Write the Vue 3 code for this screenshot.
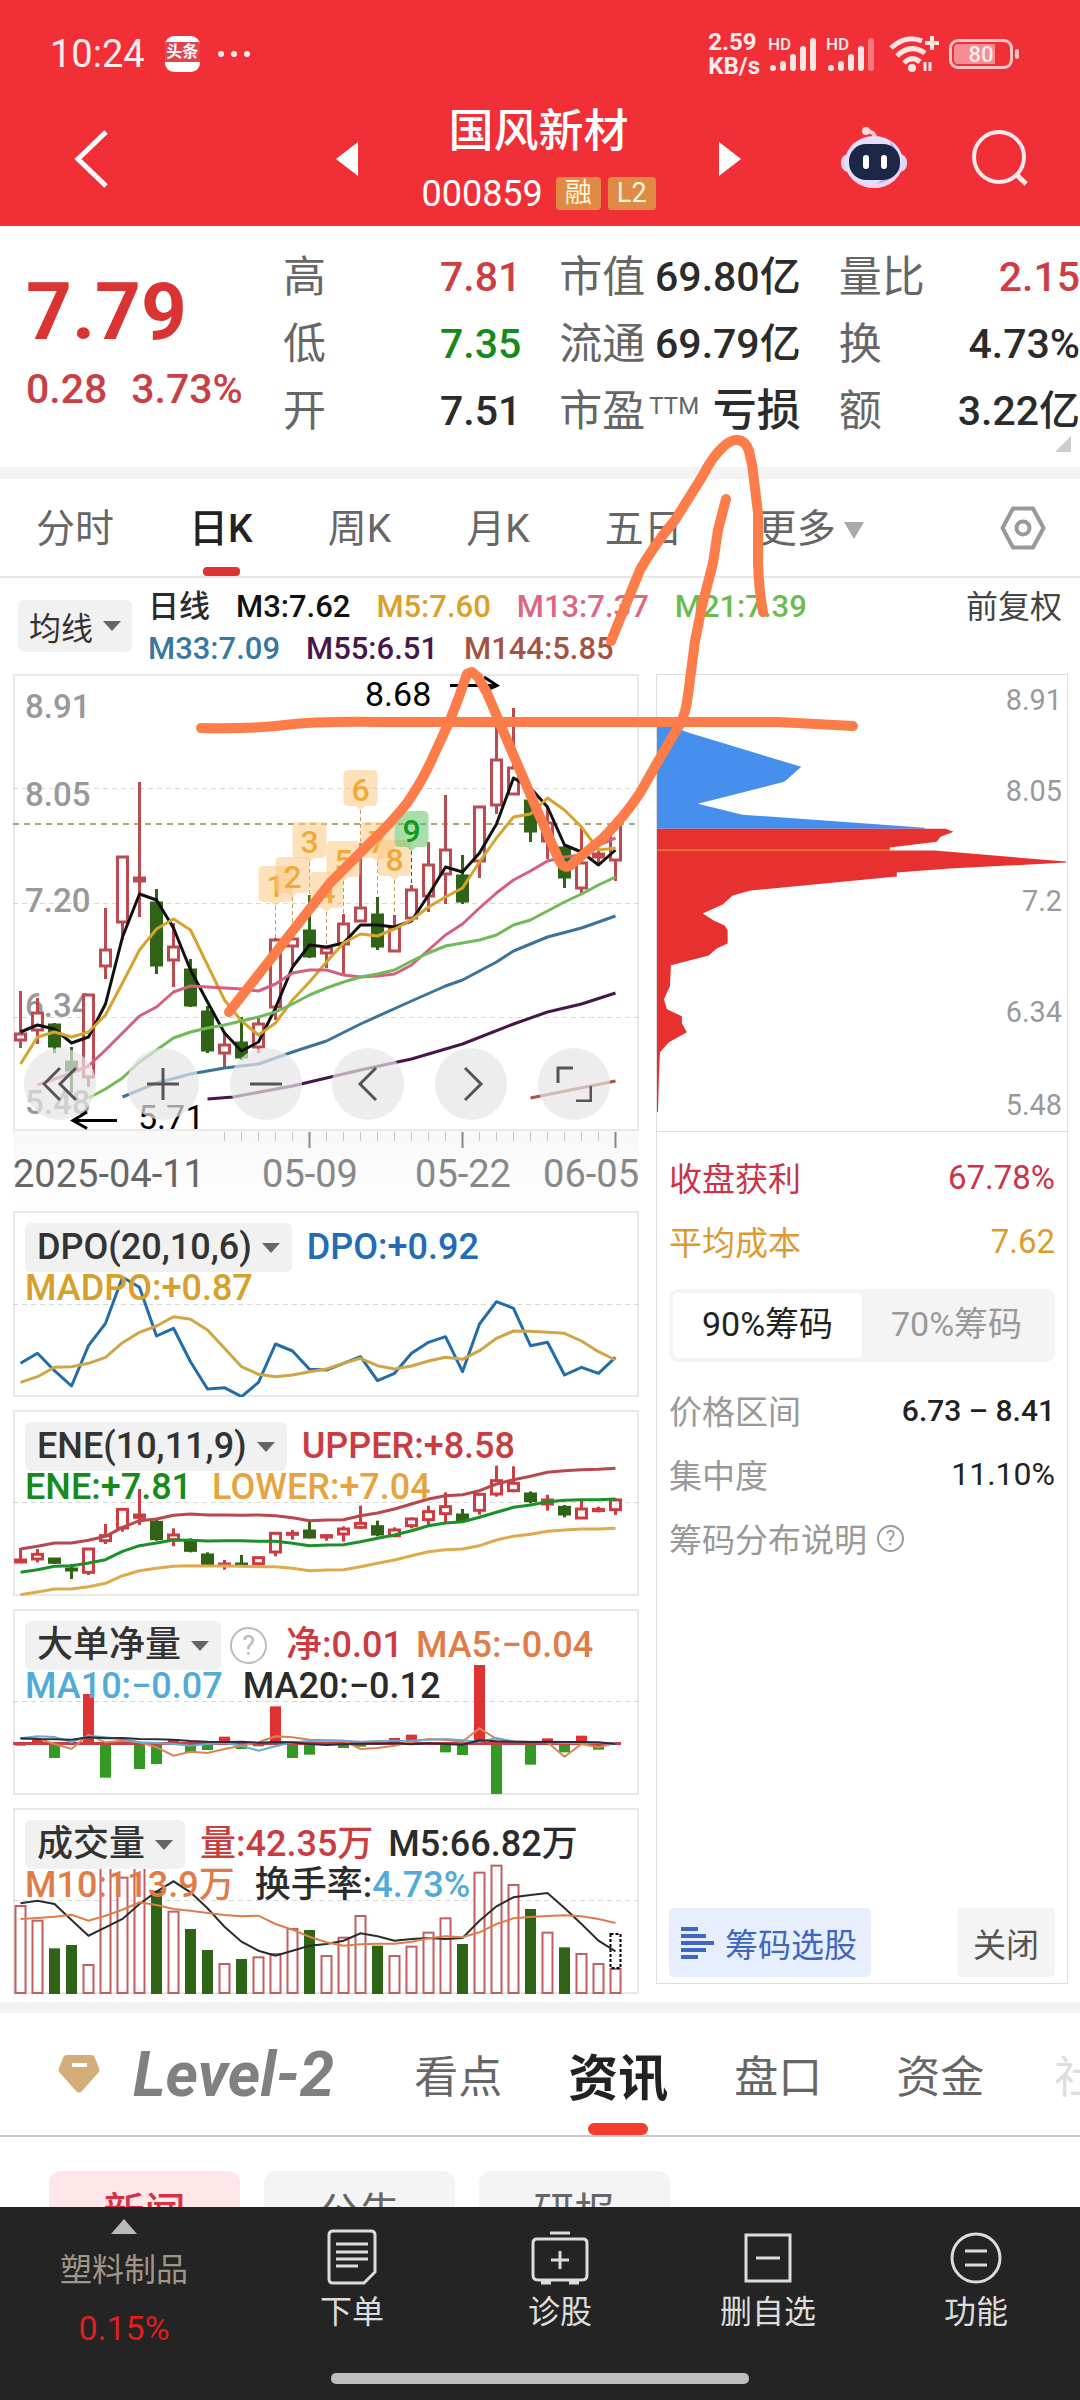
<script setup>
import { ref } from 'vue'

const xAt = (i) => 20.5 + 17 * i
const line = (values, scale = 3, start = 0) =>
  values.map((v, i) => `${xAt(i + start)},${(v / scale).toFixed(1)}`).join(' ')
const sparse = (pairs) => pairs.map(([i, y]) => `${xAt(i)},${y}`).join(' ')

const stats = [
  [
    { label: '高', value: '7.81', tone: 'up' },
    { label: '低', value: '7.35', tone: 'down' },
    { label: '开', value: '7.51' },
  ],
  [
    { label: '市值', value: '69.80亿' },
    { label: '流通', value: '69.79亿' },
    { label: '市盈', sup: 'TTM', value: '亏损', strong: true },
  ],
  [
    { label: '量比', value: '2.15', tone: 'up' },
    { label: '换', value: '4.73%' },
    { label: '额', value: '3.22亿' },
  ],
]

const periods = ['分时', '日K', '周K', '月K', '五日', '更多']
const period = ref('日K')

const legend = [
  [
    { text: '日线', color: '#2b2b2b' },
    { text: 'M3:7.62', color: '#111' },
    { text: 'M5:7.60', color: '#d9a02a' },
    { text: 'M13:7.37', color: '#dd6680' },
    { text: 'M21:7.39', color: '#6dbb50' },
  ],
  [
    { text: 'M33:7.09', color: '#3878a0' },
    { text: 'M55:6.51', color: '#47164f' },
    { text: 'M144:5.85', color: '#a65243' },
  ],
]

// [rising, high, body top, body bottom, low]
const candles = [
  [1, 991, 1033, 1041, 1048], [1, 998, 1012, 1031, 1044], [0, 1023, 1024, 1047, 1053], [0, 1047, 1061, 1071, 1093],
  [1, 994, 994, 1078, 1087], [1, 908, 949, 967, 979], [1, 856, 856, 923, 940], [1, 782, 877, 882, 917],
  [0, 889, 902, 966, 974], [1, 923, 946, 961, 987], [0, 959, 969, 1006, 1007], [0, 1006, 1011, 1051, 1053],
  [1, 1033, 1044, 1054, 1068], [0, 1017, 1042, 1058, 1060], [1, 1017, 1023, 1048, 1053], [1, 938, 939, 1008, 1020],
  [1, 937, 938, 947, 965], [0, 895, 930, 957, 958], [1, 946, 947, 954, 968], [1, 914, 923, 945, 975],
  [1, 843, 907, 922, 922], [0, 897, 914, 947, 950], [1, 915, 927, 952, 952], [1, 885, 889, 919, 922],
  [1, 842, 864, 897, 912], [1, 795, 849, 875, 904], [0, 855, 875, 902, 904], [1, 806, 806, 862, 878],
  [1, 706, 759, 806, 814], [1, 708, 767, 795, 795], [0, 800, 800, 832, 842], [1, 807, 822, 842, 859],
  [0, 846, 847, 878, 888], [1, 828, 862, 889, 894], [1, 850, 853, 858, 866], [1, 824, 825, 861, 881],
]

const averages = [
  { color: '#111', points: line([1032, 1025, 1029, 1043, 1037, 1004, 937, 894, 900, 928, 970, 1002, 1033, 1051, 1042, 1008, 967, 945, 947, 943, 925, 925, 927, 921, 895, 867, 872, 853, 824, 778, 788, 807, 845, 852, 865, 850], 1) },
  { color: '#d5a330', points: line([1064, 1037, 1032, 1037, 1032, 1015, 983, 950, 929, 919, 930, 965, 1000, 1021, 1035, 1023, 1000, 982, 962, 943, 934, 936, 929, 920, 907, 897, 888, 862, 838, 817, 814, 798, 810, 827, 850, 848], 1) },
  { color: '#d4607e', points: line([1085, 1079, 1073, 1066, 1050, 1033, 1016, 1007, 992, 986, 987, 988, 989, 991, 984, 973, 970, 970, 975, 977, 976, 974, 965, 950, 935, 924, 908, 893, 880, 871, 861, 857, 855, 845, 838], 1, 1) },
  { color: '#72b95a', points: line([1098, 1089, 1078, 1062, 1050, 1038, 1032, 1028, 1025, 1021, 1017, 1012, 1004, 995, 988, 982, 977, 974, 970, 961, 953, 946, 943, 940, 935, 925, 920, 911, 902, 894, 885, 877], 1, 4) },
  { color: '#3c7399', points: sparse([[6, 1097], [8, 1083], [10, 1074], [12, 1068], [14, 1064], [16, 1052], [18, 1041], [20, 1024], [23, 1001], [25, 986], [26, 980], [28, 962], [29, 951], [31, 937], [33, 928], [35, 916]]) },
  { color: '#451749', points: sparse([[11, 1099], [12.5, 1097], [16, 1086], [20, 1070], [23, 1059], [26, 1044], [29, 1024], [31, 1012], [33, 1004], [35, 993]]) },
  { color: '#a85545', points: sparse([[30, 1098], [35, 1081]]) },
]

const markers = [
  { n: 1, top: 866, end: 938 }, { n: 2, top: 857, end: 938 }, { n: 3, top: 822, end: 895 },
  { n: 4, top: 872, end: 946 }, { n: 5, top: 841, end: 914 }, { n: 6, top: 770, end: 843 },
  { n: 7, top: 822, end: 897 }, { n: 8, top: 840, end: 915 }, { n: 9, top: 811, end: 885 },
].map((m, k) => ({ ...m, x: xAt(15 + k) }))

const priceTicks = [[718, '8.91'], [806, '8.05'], [912, '7.20'], [1017, '6.34'], [1114, '5.48']]
const chipTicks = [[709, '8.91'], [800, '8.05'], [911, '7.2'], [1022, '6.34'], [1115, '5.48']]
const dayTicks = Array.from({ length: 24 }, (_, k) => k + 12)

const dpo = line([490, 460, 512, 558, 437, 370, 232, 262, 408, 385, 485, 567, 563, 590, 547, 432, 453, 508, 510, 490, 470, 542, 520, 460, 427, 410, 515, 372, 305, 325, 437, 427, 525, 502, 520, 472])
const madpo = line([547, 530, 502, 500, 490, 472, 428, 397, 378, 350, 358, 390, 445, 500, 523, 530, 525, 515, 507, 490, 475, 497, 507, 498, 483, 472, 478, 452, 415, 393, 394, 397, 400, 423, 455, 480])

const eneLines = [
  { color: '#b8474e', points: line([1050, 1042, 1032, 1032, 1024, 1012, 985, 965, 960, 949, 945, 948, 948, 949, 948, 950, 956, 965, 963, 962, 950, 942, 930, 915, 900, 890, 887, 875, 855, 842, 832, 820, 815, 812, 811, 808]) },
  { color: '#1b8f28', points: line([1120, 1112, 1102, 1100, 1092, 1082, 1057, 1040, 1032, 1023, 1024, 1026, 1025, 1025, 1027, 1027, 1033, 1040, 1038, 1037, 1028, 1018, 1008, 995, 980, 972, 968, 955, 940, 925, 918, 908, 904, 902, 902, 900]) },
  { color: '#dfaa4c', points: line([1187, 1179, 1170, 1170, 1163, 1153, 1130, 1115, 1108, 1102, 1100, 1101, 1101, 1102, 1103, 1103, 1108, 1115, 1113, 1112, 1103, 1093, 1083, 1070, 1058, 1052, 1050, 1040, 1023, 1012, 1006, 997, 993, 990, 990, 988]) },
]
const eneCandles = [
  [1, 1047, 1080, 1092, 1092], [1, 1050, 1063, 1083, 1090], [0, 1077, 1077, 1093, 1095], [0, 1095, 1107, 1112, 1140],
  [1, 1047, 1047, 1123, 1128], [1, 975, 1007, 1028, 1035], [1, 928, 928, 990, 998], [1, 870, 945, 958, 978],
  [0, 960, 967, 1022, 1025], [1, 988, 1005, 1025, 1042], [0, 1018, 1022, 1057, 1060], [0, 1060, 1065, 1097, 1100],
  [1, 1083, 1092, 1100, 1112], [0, 1068, 1092, 1098, 1100], [1, 1073, 1073, 1097, 1100], [1, 1000, 1000, 1062, 1072],
  [1, 993, 1000, 1008, 1022], [0, 967, 993, 1017, 1018], [1, 1005, 1007, 1017, 1025], [1, 982, 987, 1008, 1028],
  [1, 920, 970, 988, 990], [0, 965, 980, 1008, 1012], [1, 985, 990, 1013, 1015], [1, 955, 957, 983, 988],
  [1, 920, 935, 965, 978], [1, 880, 920, 947, 970], [0, 930, 945, 967, 970], [1, 883, 883, 937, 947],
  [1, 800, 842, 888, 893], [1, 802, 850, 878, 880], [0, 877, 882, 908, 913], [1, 887, 900, 918, 935],
  [0, 918, 922, 948, 955], [1, 905, 927, 960, 960], [1, 923, 928, 938, 940], [1, 898, 900, 935, 948],
].map(([up, ...v]) => [up, ...v.map((n) => n / 3)])

const netBars = [
  [0, 440], [1, 422], [2, 477], [4, 285], [5, 536], [7, 510], [8, 495], [9, 420], [10, 460], [11, 453], [12, 413], [13, 450],
  [14, 442], [15, 322], [16, 477], [17, 467], [19, 447], [20, 443], [22, 417], [23, 407], [25, 460], [26, 468],
  [27, 198], [28, 585], [30, 497], [31, 418], [32, 460], [33, 410], [34, 452],
].map(([i, v]) => ({ x: xAt(i) - 5.5, y: Math.min(v, 433) / 3, h: Math.abs(v - 433) / 3, up: v < 433 }))
const netLines = [
  { color: '#dc8354', points: line([420, 418, 435, 450, 408, 430, 425, 430, 445, 470, 458, 462, 450, 440, 430, 412, 415, 422, 424, 425, 450, 447, 440, 428, 420, 423, 428, 388, 420, 427, 428, 430, 473, 435, 445, 432]) },
  { color: '#68a9cf', points: line([418, 412, 414, 430, 410, 415, 420, 430, 432, 435, 440, 435, 432, 440, 455, 442, 430, 426, 425, 425, 428, 426, 425, 425, 422, 420, 424, 428, 417, 428, 429, 430, 432, 431, 432, 434]) },
  { color: '#2a2d3d', points: line([418, 420, 421, 422, 415, 418, 417, 420, 421, 422, 426, 428, 429, 428, 431, 429, 430, 435, 438, 436, 434, 434, 433, 436, 433, 435, 437, 424, 427, 428, 429, 428, 429, 429, 430, 435]) },
]

const volumes = [
  [1, 918], [1, 962], [0, 1048], [0, 1038], [1, 1095], [1, 795], [1, 833], [1, 795], [0, 875], [1, 935], [0, 990], [0, 1053],
  [1, 1092], [0, 1080], [1, 1072], [1, 1062], [1, 987], [0, 993], [1, 1068], [1, 1013], [1, 948], [0, 1040], [1, 1068], [1, 1040],
  [1, 998], [1, 955], [0, 1035], [1, 818], [1, 797], [1, 855], [0, 930], [1, 998], [0, 1045], [1, 1062], [1, 1092], [1, 1107],
]
const volumeLines = [
  { color: '#2c2c2c', points: line([913, 905, 915, 963, 1010, 985, 960, 915, 878, 847, 880, 928, 983, 1028, 1055, 1070, 1055, 1040, 1035, 1025, 1003, 1012, 1025, 1020, 1017, 1020, 1017, 965, 922, 895, 888, 882, 927, 975, 1025, 1057]) },
  { color: '#dd7d4c', points: line([960, 957, 953, 947, 965, 950, 932, 910, 918, 930, 935, 942, 948, 952, 950, 975, 992, 1013, 1030, 1040, 1036, 1034, 1034, 1028, 1018, 1012, 1015, 1000, 975, 958, 954, 951, 949, 952, 960, 972]) },
]

const chipRange = ref('90')
const sections = ['看点', '资讯', '盘口', '资金', '社区']
const section = ref('资讯')
</script>

<template>
  <div class="page">
    <header class="top">
      <div class="status">
        <span class="clock">10:24</span>
        <span class="app-badge"><b>头条</b><i></i></span>
        <span class="dots"><i></i><i></i><i></i></span>
        <span class="speed">2.59<br />KB/s</span>
        <span v-for="n in 2" :key="n" class="signal">
          <small>HD</small>
          <svg viewBox="0 0 50 36" aria-hidden="true">
            <g stroke="#ffe4e4" stroke-width="6" stroke-linecap="round">
              <path d="M5 32v0" /><path d="M15 28v4" /><path d="M25 21v11" /><path d="M35 13v19" />
              <path d="M45 5v27" :opacity="n === 2 ? 0.4 : 1" />
            </g>
          </svg>
        </span>
        <svg class="wifi" viewBox="0 0 52 38" aria-hidden="true">
          <g fill="none" stroke="#ffe4e4" stroke-width="5">
            <path d="M2 13Q17 -1 33 6" /><path d="M8 21Q21 8 36 18" /><path d="M15 28Q23 20 31 27" />
            <path d="M43 1v14M36 8h14" stroke-width="4" />
            <path d="M36 27v9M41 36v-9" stroke-width="3" />
          </g>
          <circle cx="23" cy="33" r="4" fill="#ffe4e4" />
        </svg>
        <span class="battery"><b>80</b></span>
      </div>
      <div class="title-bar">
        <button class="back" aria-label="返回">
          <svg viewBox="0 0 40 60"><path d="M34 3 6 30 34 57" fill="none" stroke="#fff" stroke-width="5" /></svg>
        </button>
        <button class="step" aria-label="上一只"><svg viewBox="0 0 22 34"><path d="M22 0v34L0 17z" fill="#fff" /></svg></button>
        <div class="stock">
          <h1>国风新材</h1>
          <p><span>000859</span><em>融</em><em>L2</em></p>
        </div>
        <button class="step" aria-label="下一只"><svg viewBox="0 0 22 34"><path d="M0 0v34l22-17z" fill="#fff" /></svg></button>
        <button class="robot" aria-label="助手">
          <svg viewBox="0 0 68 64">
            <path d="M35 13Q36 5 27 4" fill="none" stroke="#ffc9d4" stroke-width="4" />
            <circle cx="26" cy="4" r="4" fill="#ffd9dd" />
            <rect x="1" y="27" width="66" height="18" rx="8" fill="#ded6fa" />
            <ellipse cx="34" cy="35" rx="29" ry="26" fill="#e6dffb" />
            <path d="M50 15Q62 25 60 42 52 60 30 59 58 50 50 15" fill="#bdb0f2" />
            <path d="M9 46Q34 68 58 46 50 61 34 61T9 46" fill="#f4d5ee" />
            <rect x="9" y="17" width="51" height="36" rx="17" fill="#1c2747" />
            <path d="M26 31v8M44 31v8" stroke="#fff" stroke-width="6" stroke-linecap="round" />
          </svg>
        </button>
        <button class="search" aria-label="搜索">
          <svg viewBox="0 0 60 60"><circle cx="29" cy="28" r="25" fill="none" stroke="#ffe9e9" stroke-width="4" /><path d="m46 45 10 10" stroke="#ffe9e9" stroke-width="5" /></svg>
        </button>
      </div>
    </header>

    <section class="quote">
      <div class="price">
        <strong>7.79</strong>
        <p><span>0.28</span><span>3.73%</span></p>
      </div>
      <div class="stats">
        <dl v-for="(column, c) in stats" :key="c">
          <div v-for="s in column" :key="s.label">
            <dt>{{ s.label }}<sup v-if="s.sup">{{ s.sup }}</sup></dt>
            <dd :class="[s.tone, { strong: s.strong }]">{{ s.value }}</dd>
          </div>
        </dl>
      </div>
      <i class="corner"></i>
    </section>

    <nav class="periods">
      <button v-for="p in periods" :key="p" :class="{ active: p === period }" @click="period = p">
        {{ p }}<i v-if="p === '更多'" class="caret"></i>
      </button>
      <button class="settings" aria-label="设置">
        <svg viewBox="0 0 46 44"><g fill="none" stroke="#999" stroke-width="4"><path d="M13 2.500h20L43.500 22 33 41.500H13L2.500 22z" stroke-linejoin="round" /><circle cx="23" cy="22" r="6.500" /></g></svg>
      </button>
    </nav>

    <div class="legend">
      <button class="pick">均线<i class="caret"></i></button>
      <div class="legend-rows">
        <p v-for="(row, r) in legend" :key="r">
          <span v-for="item in row" :key="item.text" :style="{ color: item.color }">{{ item.text }}</span>
        </p>
      </div>
      <button class="adjust">前复权</button>
    </div>

    <main class="board">
      <div class="charts">
        <div class="kline">
          <svg viewBox="13 674 626 457" preserveAspectRatio="none">
            <g stroke="#d8d8d8" stroke-width="1" stroke-dasharray="5 4"><path d="M13 788.500H639M13 903.500H639M13 1017.500H639" /></g>
            <path d="M13 824H639" stroke="#a8a878" stroke-width="2" stroke-dasharray="6 5" />
            <g class="axis-label"><text v-for="t in priceTicks" :key="t[1]" x="25" :y="t[0]">{{ t[1] }}</text></g>
            <g v-for="(c, i) in candles" :key="i" :stroke="c[0] ? '#bb4b50' : '#2f6416'" :fill="c[0] ? '#fff' : '#2f6416'">
              <path :d="`M${xAt(i)} ${c[1]}V${c[4]}`" stroke-width="3" />
              <rect :x="xAt(i) - 5" :y="c[2] + 1" width="10" :height="Math.max(2, c[3] - c[2] - 2)" stroke-width="3" />
            </g>
            <polyline v-for="a in averages" :key="a.color" :points="a.points" fill="none" :stroke="a.color" stroke-width="3" stroke-linejoin="round" />
            <g v-for="m in markers" :key="m.n">
              <path :d="`M${m.x} ${m.top + 40}V${m.end}`" :stroke="m.n === 9 ? '#286b28' : '#bda05c'" stroke-dasharray="4 3" />
              <path :d="`M${m.x - 12} ${m.top}h24q5 0 5 5v26q0 5 -5 5h-7l-5 4-5-4h-7q-5 0-5-5v-26q0-5 5-5z`" :fill="m.n === 9 ? '#63c268' : '#fcc983'" opacity="0.55" />
              <text :x="m.x" :y="m.top + 31" text-anchor="middle" class="marker" :fill="m.n === 9 ? '#0f9a18' : '#efaa3a'">{{ m.n }}</text>
            </g>
            <g class="extreme"><text x="365" y="706">8.68</text><text x="138" y="1129">5.71</text></g>
            <g fill="none" stroke="#000" stroke-width="3"><path d="M450 685.500H494M484 677l13 8.500-13 6" /><path d="M117 1120.500H73M87 1112l-14 8.500 14 8" /></g>
          </svg>
          <div class="tools">
            <button aria-label="最早"><svg viewBox="0 0 36 36"><path d="M18 2 2 18l16 16M34 2 18 18l16 16" /></svg></button>
            <button aria-label="放大"><svg viewBox="0 0 36 36"><path d="M2 18h32M18 2v32" /></svg></button>
            <button aria-label="缩小"><svg viewBox="0 0 36 36"><path d="M2 18h32" /></svg></button>
            <button aria-label="向左"><svg viewBox="0 0 36 36"><path d="M26 2 10 18l16 16" /></svg></button>
            <button aria-label="向右"><svg viewBox="0 0 36 36"><path d="M12 2l16 16-16 16" /></svg></button>
            <button aria-label="全屏"><svg viewBox="0 0 36 36"><path d="M17 2H2v15M20 35h15V20" /></svg></button>
          </div>
        </div>
        <svg class="dates" viewBox="13 1131 626 80" preserveAspectRatio="none">
          <path v-for="i in dayTicks" :key="i" :d="`M${xAt(i)} 1132v${i % 9 === 8 ? 16 : 9}`" :stroke="i % 9 === 8 ? '#888' : '#c4c4c4'" :stroke-width="i % 9 === 8 ? 2 : 1" />
          <text x="13" y="1187" fill="#666">2025-04-11</text>
          <g fill="#888"><text x="310" y="1187" text-anchor="middle">05-09</text><text x="463" y="1187" text-anchor="middle">05-22</text><text x="639" y="1187" text-anchor="end">06-05</text></g>
        </svg>

        <section class="sub">
          <svg viewBox="13 11 626 186" preserveAspectRatio="none">
            <path class="mid" d="M13 104.500H639" />
            <g fill="none" stroke-width="3" stroke-linejoin="round"><polyline :points="dpo" stroke="#226ca8" /><polyline :points="madpo" stroke="#cfa647" /></g>
          </svg>
          <p><button class="pick">DPO(20,10,6)<i class="caret"></i></button><span class="blue">DPO:+0.92</span></p>
          <p class="second"><span class="gold">MADPO:+0.87</span></p>
        </section>

        <section class="sub">
          <svg viewBox="13 211 626 186" preserveAspectRatio="none">
            <path class="mid" d="M13 303.500H639" />
            <g v-for="(c, i) in eneCandles" :key="i" :stroke="c[0] ? '#ce3c42' : '#2f6416'" :fill="c[0] ? '#fff' : '#2f6416'">
              <path :d="`M${xAt(i)} ${c[1]}V${c[4]}`" stroke-width="3" />
              <rect :x="xAt(i) - 5" :y="c[2] + 1" width="10" :height="Math.max(1, c[3] - c[2] - 2)" stroke-width="3" />
            </g>
            <polyline v-for="l in eneLines" :key="l.color" :points="l.points" fill="none" :stroke="l.color" stroke-width="3" stroke-linejoin="round" />
          </svg>
          <p><button class="pick">ENE(10,11,9)<i class="caret"></i></button><span class="red">UPPER:+8.58</span></p>
          <p class="second"><span class="green">ENE:+7.81</span><span class="amber">LOWER:+7.04</span></p>
        </section>

        <section class="sub">
          <svg viewBox="13 10 626 186" preserveAspectRatio="none">
            <path class="mid" d="M13 102.500H639" />
            <rect v-for="b in netBars" :key="b.x" :x="b.x" :y="b.y" width="11" :height="b.h" :fill="b.up ? '#e03133' : '#329922'" />
            <path d="M13 144.500H621" stroke="#c93e44" stroke-width="3" />
            <polyline v-for="l in netLines" :key="l.color" :points="l.points" fill="none" :stroke="l.color" stroke-width="2" />
          </svg>
          <p class="tight"><button class="pick">大单净量<i class="caret"></i></button><i class="help big">?</i><span class="red">净:0.01</span><span class="orange">MA5:−0.04</span></p>
          <p class="second"><span class="sky">MA10:−0.07</span><span>MA20:−0.12</span></p>
        </section>

        <section class="sub">
          <svg viewBox="13 209 626 186" preserveAspectRatio="none">
            <path class="mid" d="M13 301.500H639" />
            <template v-for="(v, i) in volumes" :key="i">
              <rect v-if="v[0]" :x="xAt(i) - 5" :y="v[1] / 3 + 1" width="10" :height="394 - v[1] / 3 - 1" fill="#fff" stroke="#c45e60" stroke-width="2" />
              <rect v-else :x="xAt(i) - 5.5" :y="v[1] / 3" width="11" :height="395 - v[1] / 3" fill="#2f6416" />
            </template>
            <rect x="610.500" y="335" width="10" height="34" fill="#fff" stroke="#000" stroke-width="2" stroke-dasharray="3 2" />
            <polyline v-for="l in volumeLines" :key="l.color" :points="l.points" fill="none" :stroke="l.color" stroke-width="2" />
          </svg>
          <p><button class="pick">成交量<i class="caret"></i></button><span class="red">量:42.35万</span><span>M5:66.82万</span></p>
          <p class="second"><span class="orange">M10:113.9万</span><span>换手率:<b class="sky">4.73%</b></span></p>
        </section>
      </div>

      <aside class="chips">
        <svg class="chip-chart" viewBox="656 674 412 457" preserveAspectRatio="none">
          <path d="M656 726H673L688 732 801 766 784 781 697 803 742 814 925 827V828H656z" fill="#468fec" />
          <path d="M656 828H946L954 831 941 836 937 841 890 847V850H935L1067 861V862L950 868 897 872V876L750 890 732 895 722 904 702 913 713 920 724 925 727 930V943L716 948 708 955 670 965 669 986 663 999 666 1009 681 1016V1023L686 1032 668 1042 659 1052 658 1075 657 1112H656z" fill="#e73030" />
          <path d="M656 849.500H895" stroke="#f0a03a" stroke-width="1" />
          <g class="chip-label"><text v-for="t in chipTicks" :key="t[1]" x="1063" :y="t[0]" text-anchor="end">{{ t[1] }}</text></g>
        </svg>
        <div class="chip-info">
          <p class="crimson"><span>收盘获利</span><span>67.78%</span></p>
          <p class="honey"><span>平均成本</span><span>7.62</span></p>
          <div class="toggle">
            <button :class="{ on: chipRange === '90' }" @click="chipRange = '90'">90%筹码</button>
            <button :class="{ on: chipRange === '70' }" @click="chipRange = '70'">70%筹码</button>
          </div>
          <p><span>价格区间</span><b>6.73 – 8.41</b></p>
          <p><span>集中度</span><b class="plain">11.10%</b></p>
          <p class="note"><span>筹码分布说明</span><i class="help">?</i></p>
        </div>
        <div class="chip-actions">
          <button class="select">
            <svg viewBox="0 0 34 32"><path d="M0 2h17M0 9h25M0 16h33M0 23h25M0 30h17" stroke="#3f66c0" stroke-width="4" /></svg>筹码选股
          </button>
          <button class="close">关闭</button>
        </div>
      </aside>
    </main>

    <nav class="sections">
      <svg class="gem" viewBox="0 0 42 38"><path d="M9 0h24q3 0 4 3l4 10q1 3-1 5L24 36q-3 3-6 0L2 18q-2-2-1-5L5 3q1-3 4-3z" fill="#d3ae79" /><path d="M14 10h15" stroke="#fff" stroke-width="4" /></svg>
      <a class="level" href="#level2">Level-2</a>
      <button v-for="s in sections" :key="s" :class="{ active: s === section, faded: s === '社区' }" @click="section = s">{{ s }}</button>
    </nav>
    <div class="news-types">
      <button class="active">新闻</button><button>公告</button><button>研报</button>
    </div>

    <svg class="doodle" viewBox="0 0 1080 1100" aria-hidden="true">
      <g fill="none" stroke="#fc7c4a" stroke-width="10" stroke-linecap="round" stroke-linejoin="round">
        <path d="M201 728Q252 729 285 725T380 722H778L853 726" />
        <path d="M229 1012 270 960 330 883 373 840Q391 823 407 803 423 780 433 757L450 720Q459 698 467 674L472 672 478 677 487 693 507 740 537 810 559 860Q565 872 573 863L603 838Q624 817 640 793L657 763 680 724Q686 713 688 695L695 641 702 606 713 563 718 530 726 499" />
        <path d="M611 641 640 570Q652 548 675 520L702 477Q712 457 723 447 731 439 738 440 746 441 749 451 753 466 754 480L758 513V563Q759 592 763 612" />
      </g>
    </svg>

    <footer class="dock">
      <div class="dock-items">
        <button class="sector"><i></i><span>塑料制品</span><b>0.15%</b></button>
        <button><svg viewBox="0 0 50 56"><path d="M6 2h38q4 0 4 4v37L37 54H6q-4 0-4-4V6q0-4 4-4zM9 15h32M9 23h32M9 30h32M9 37h22" /></svg>下单</button>
        <button><svg viewBox="0 0 58 56"><path d="M19 4h20M6 10h46q4 0 4 4v32q0 5-5 5H7q-5 0-5-5V14q0-4 4-4zM20 31h18M29 22v18M10 54h10M38 54h10" /></svg>诊股</button>
        <button><svg viewBox="0 0 50 56"><path d="M3 6h44v46H3zM13 29h24" /></svg>删自选</button>
        <button><svg viewBox="0 0 54 56"><circle cx="27" cy="29" r="24" /><path d="M16 22h22M16 36h22" /></svg>功能</button>
      </div>
      <i class="home"></i>
    </footer>
  </div>
</template>

<style>
body { background: #fff; }
</style>

<style scoped>
.page { position: relative; min-height: 100vh; overflow: hidden; background: #fff; color: #2b2b2b; font-family: Roboto, "Noto Sans CJK SC", sans-serif; }
.page * { box-sizing: border-box; }
p, h1, dl, dd { margin: 0; }
svg { display: block; }
i, em { font-style: normal; }
button { margin: 0; padding: 0; border: 0; background: none; color: inherit; font: inherit; cursor: pointer; white-space: nowrap; }
.caret { display: inline-block; border: solid transparent; border-width: 10px 9px 0; border-top-color: #666; }

.top { height: 226px; background: #f12f37; color: #fff; }
.status { display: flex; align-items: center; height: 92px; padding: 16px 63px 0 50px; color: #ffecec; }
.clock { font-size: 38px; }
.app-badge { display: flex; flex-direction: column; justify-content: flex-end; width: 35px; height: 36px; margin-left: 20px; overflow: hidden; border-radius: 9px; background: #fff; color: #fff; text-align: center; }
.app-badge b { background: #dd4550; font-size: 16px; line-height: 20px; }
.app-badge i { height: 10px; }
.dots { display: flex; gap: 7px; margin: 0 auto 0 18px; }
.dots i { width: 6px; height: 6px; border-radius: 3px; background: #ffecec; }
.speed { font-size: 24px; font-weight: 700; line-height: 24px; }
.signal { position: relative; width: 50px; height: 36px; margin-left: 8px; }
.signal small { position: absolute; left: 0; top: 0; font-size: 17px; line-height: 17px; font-weight: 500; }
.signal svg { width: 50px; height: 36px; }
.wifi { width: 52px; height: 38px; margin-left: 13px; }
.battery { position: relative; width: 64px; height: 30px; margin: 0 4px 0 8px; border: 3px solid #ffc4c4; border-radius: 9px; background: linear-gradient(90deg, #f68d92 75%, transparent 0); background-clip: content-box; padding: 2px; text-align: center; font-size: 22px; line-height: 22px; }
.battery::after { content: ""; position: absolute; right: -9px; top: 7px; width: 4px; height: 10px; border-radius: 2px; background: #ffc4c4; }
.battery b { font-weight: 500; }
.title-bar { display: flex; align-items: center; height: 134px; padding: 0 50px 0 72px; }
.back svg { width: 40px; height: 60px; }
.step svg { width: 22px; height: 34px; }
.back { margin-right: 224px; }
.stock { flex: 1; text-align: center; }
.stock h1 { font-size: 45px; font-weight: 500; line-height: 58px; }
.stock p { display: flex; justify-content: center; align-items: center; gap: 7px; margin-top: 11px; font-size: 36px; line-height: 44px; }
.stock p span { margin-right: 6px; }
.stock em { padding: 0 9px; border-radius: 4px; background: #df8b45; font-size: 27px; line-height: 33px; color: #fff6dd; }
.robot { margin: 0 62px 0 99px; }
.robot svg { width: 68px; height: 64px; }
.search svg { width: 60px; height: 60px; }

.quote { position: relative; display: flex; height: 253px; border-bottom: 12px solid #f3f3f3; padding-top: 18px; }
.price { width: 283px; padding-left: 26px; color: #d93334; }
.price strong { display: block; padding-top: 24px; font-size: 80px; font-weight: 700; line-height: 88px; }
.price p { display: flex; gap: 24px; padding-top: 7px; color: #c84044; font-size: 41px; font-weight: 500; line-height: 52px; }
.stats { flex: 1; display: grid; grid-template-columns: 238fr 241fr 241fr; column-gap: 38px; }
.stats dl > div { display: flex; justify-content: space-between; line-height: 67px; white-space: nowrap; }
.stats dt { color: #666; font-size: 43px; }
.stats sup { position: relative; display: inline-block; padding-left: 4px; font-size: 24px; line-height: 24px; vertical-align: 12px; }
.stats dd { font-size: 41px; font-weight: 500; }
.stats .strong { font-size: 44px; }
.stats .up { color: #cb3f43; }
.stats .down { color: #168a1a; }
.corner { position: absolute; right: 9px; bottom: 15px; border: solid transparent; border-width: 8px; border-right-color: #ccc; border-bottom-color: #ccc; }

.periods { display: flex; align-items: center; gap: 75px; height: 99px; padding: 0 34px 0 36px; border-bottom: 2px solid #e6e6e6; color: #666; font-size: 39px; }
.periods button { position: relative; height: 97px; padding-bottom: 6px; }
.periods .active { color: #222; font-weight: 500; }
.periods .active::after { content: ""; position: absolute; left: 50%; bottom: 0; width: 37px; height: 9px; margin-left: -18px; border-radius: 4px; background: #dc3335; }
.periods .caret { margin-left: 8px; border-width: 17px 10px 0; border-top-color: #aaa; vertical-align: 3px; }
.periods .settings { margin-left: auto; padding: 0; }
.settings svg { width: 46px; height: 44px; }

.legend { display: flex; align-items: flex-start; height: 96px; padding: 8px 18px; font-size: 32px; }
.pick { display: flex; align-items: center; gap: 10px; border-radius: 6px; background: #f1f1f1; color: #333; }
.legend .pick { height: 52px; margin: 14px 16px 0 0; padding: 0 11px; }
.legend-rows { flex: 1; font-size: 31px; font-weight: 500; line-height: 42px; white-space: nowrap; }
.legend-rows p { display: flex; gap: 26px; }
.adjust { color: #444; line-height: 42px; }

.board { display: grid; grid-template-columns: minmax(0, 626fr) minmax(0, 412fr); column-gap: 17px; padding: 0 12px 0 13px; border-bottom: 11px solid #f3f3f3; }
.charts { padding-bottom: 8px; }
.kline, .sub { position: relative; box-shadow: inset 0 0 0 2px #e9e9e9; }
.kline > svg { width: 100%; height: 457px; }
.dates { width: 100%; height: 80px; background: linear-gradient(#f8f8f8, #fff); font-size: 38px; }
.axis-label { fill: #999; font-size: 33px; font-weight: 500; }
.marker { font-size: 32px; font-weight: 500; }
.extreme { font-size: 34px; }
.tools { position: absolute; left: 11px; right: 29px; bottom: 11px; display: flex; justify-content: space-between; }
.tools button { display: grid; place-items: center; width: 72px; height: 72px; border-radius: 50%; background: rgba(229, 229, 229, .7); }
.tools svg { width: 36px; height: 36px; fill: none; stroke: #555; stroke-width: 3px; }
.sub { height: 186px; padding: 12px 12px 0; font-size: 36px; font-weight: 500; }
.sub + .sub { margin-top: 13px; }
.sub > svg { position: absolute; inset: 0; width: 100%; height: 100%; }
.mid { stroke: #d8d8d8; stroke-dasharray: 5 4; }
.sub p { position: relative; display: flex; align-items: baseline; gap: 15px; height: 49px; line-height: 49px; white-space: nowrap; }
.sub p.second { height: 32px; gap: 20px; line-height: 32px; }
.sub .tight { gap: 9px; }
.sub .tight .red { margin: 0 4px 0 10px; }
.sub .pick { align-items: center; height: 49px; padding: 0 12px; font-weight: 500; }
.sub b { font-weight: 500; }
.help { display: grid; place-items: center; width: 27px; height: 27px; border: 2px solid #999; border-radius: 50%; color: #999; font-size: 20px; line-height: 20px; font-weight: 400; }
.help.big { align-self: center; width: 37px; height: 37px; border-color: #bbb; color: #bbb; font-size: 27px; }
.blue { color: #226cb5; }
.gold { color: #d6a02c; }
.red { color: #cb3c41; }
.green { color: #168a1a; }
.amber { color: #e6a440; }
.orange { color: #e07c47; }
.sky { color: #52aad6; }

.chips { display: flex; flex-direction: column; margin-bottom: 18px; border: 1px solid #dedede; }
.chip-chart { width: 100%; height: 457px; border-bottom: 1px solid #dedede; }
.chip-label { fill: #999; font-size: 29px; }
.chip-info { padding: 13px 12px 0; color: #999; font-size: 33px; }
.chip-info p { display: flex; justify-content: space-between; align-items: center; height: 64px; }
.chip-info p.crimson { color: #cc3248; }
.chip-info p.honey { color: #dd9a30; }
.chip-info b { color: #222; font-size: 30px; font-weight: 500; }
.chip-info b.plain { font-size: 32px; font-weight: 400; }
.toggle { display: flex; height: 73px; margin: 16px 0; padding: 4px; border-radius: 9px; background: #f4f4f4; font-size: 34px; line-height: 58px; }
.toggle button { flex: 1; padding-bottom: 4px; border-radius: 5px; }
.toggle .on { background: #fff; color: #222; }
.chip-info p.note { justify-content: flex-start; gap: 10px; }
.chip-actions { display: flex; justify-content: space-between; margin: auto 12px 6px; font-size: 33px; }
.chip-actions button { display: flex; align-items: center; gap: 10px; height: 69px; padding: 0 14px; border-radius: 5px; }
.chip-actions .select { padding: 0 14px 0 12px; background: #e7eefd; color: #3f66c0; }
.chip-actions .select svg { width: 34px; height: 32px; }
.chip-actions .close { padding: 0 16px; background: #f4f4f4; color: #555; }

.sections { display: flex; align-items: center; height: 124px; padding-left: 58px; overflow: hidden; border-bottom: 2px solid #c9c9c9; color: #666; font-size: 44px; white-space: nowrap; }
.gem { flex: none; width: 42px; height: 38px; margin-right: 33px; }
.level { width: 207px; margin-right: 14px; color: #808080; font-size: 62px; font-style: italic; font-weight: 700; text-decoration: none; }
.sections button { position: relative; height: 122px; margin-left: 66px; }
.sections button:nth-of-type(4) { margin-left: 74px; }
.sections button.active { color: #222; font-size: 50px; font-weight: 700; }
.sections button.active::after { content: ""; position: absolute; left: 50%; bottom: 0; width: 60px; height: 12px; margin-left: -30px; border-radius: 6px; background: #f43c30; }
.sections button.faded { color: #ddd; margin-left: 70px; }
.news-types { display: flex; gap: 24px; padding: 34px 49px 0; }
.news-types button { width: 191px; height: 76px; border-radius: 12px; background: #f4f4f4; color: #666; font-size: 41px; }
.news-types .active { background: #ffe6e8; color: #d62f48; font-weight: 500; }

.doodle { position: absolute; left: 0; top: 0; width: 100%; pointer-events: none; }

.dock { position: fixed; left: 0; right: 0; bottom: 0; height: 193px; background: #242424; color: #dcdcdc; }
.dock-items { display: grid; grid-template-columns: 248fr 208fr 208fr 208fr 208fr; height: 166px; font-size: 32px; line-height: 40px; }
.dock-items button { display: flex; flex-direction: column; align-items: center; gap: 7px; padding-top: 22px; }
.dock-items svg { height: 56px; fill: none; stroke: #dcdcdc; stroke-width: 3px; }
.dock-items .sector { gap: 0; padding: 12px 0 0; }
.sector i { border: solid transparent; border-width: 0 13px 15px; border-bottom-color: #bbb; }
.sector span { margin-top: 16px; color: #a19588; }
.sector b { margin-top: 18px; color: #dc1f1f; font-weight: 400; font-size: 34px; }
.home { display: block; width: 418px; height: 11px; margin: 0 auto; border-radius: 5px; background: #bdbdbd; }
</style>
